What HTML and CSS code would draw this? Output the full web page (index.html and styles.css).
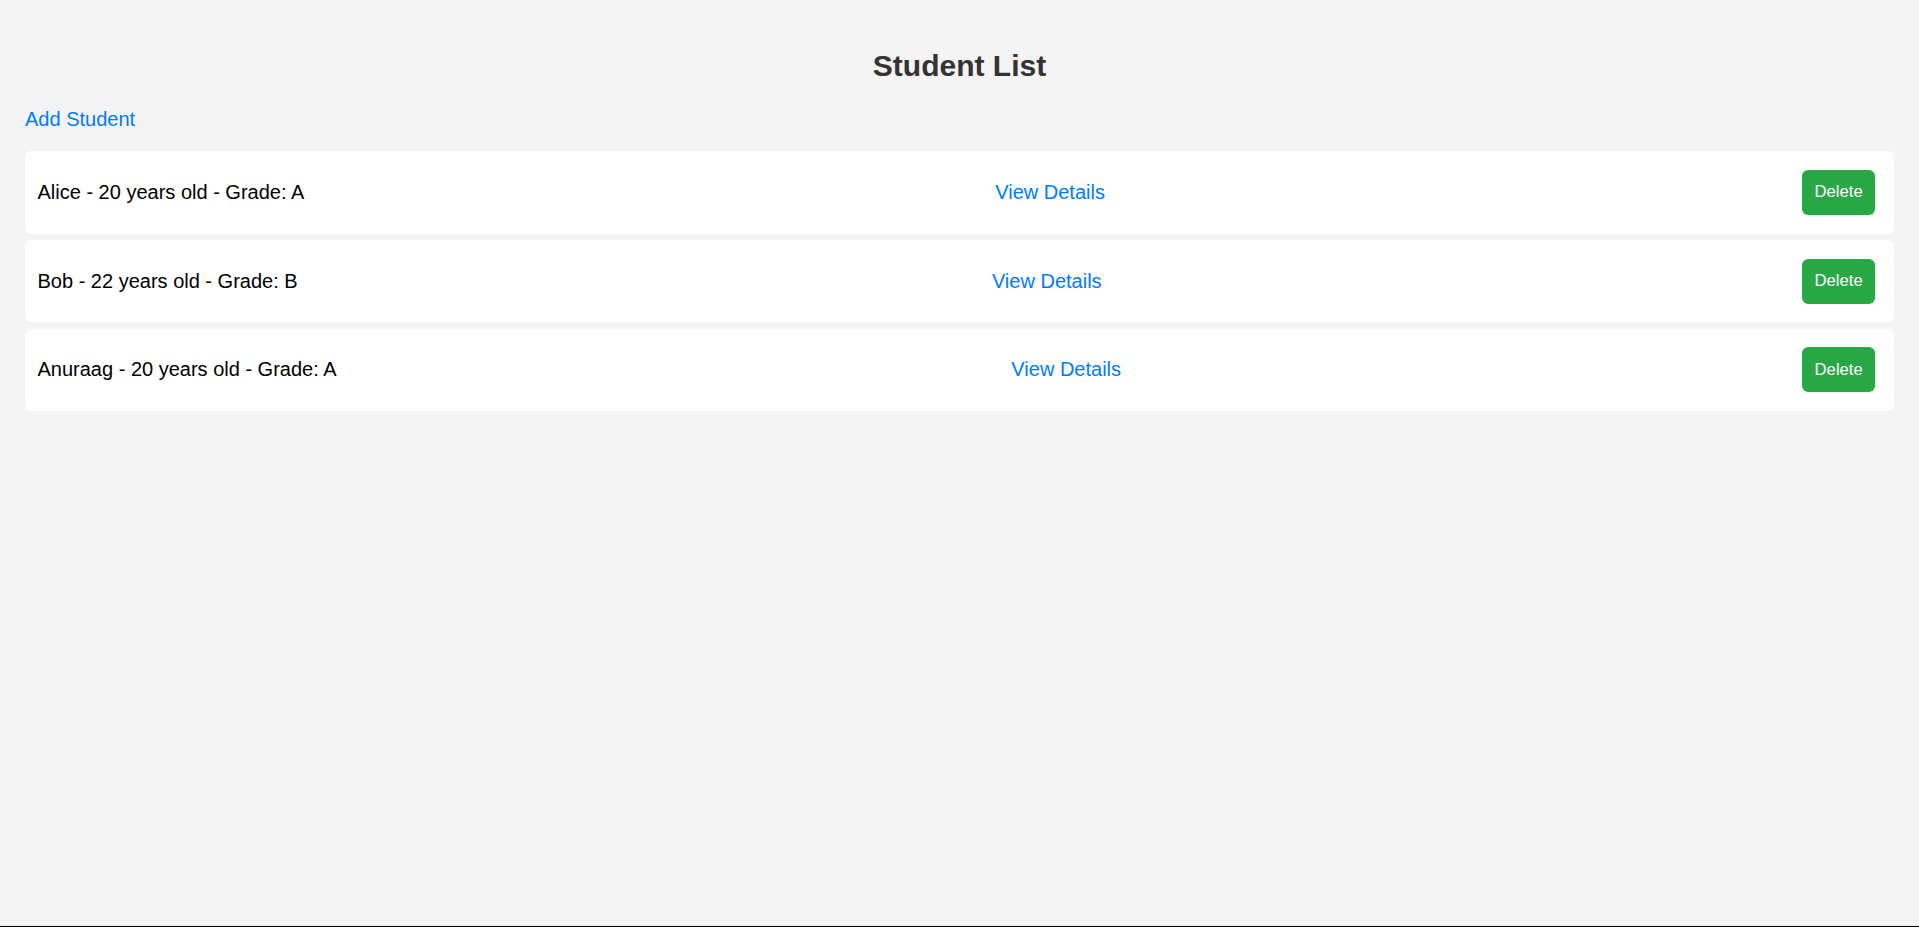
FILE: index.html
```html
<!DOCTYPE html>
<html lang="en">
<head>
<meta charset="utf-8">
<title>Student List</title>
<link rel="stylesheet" href="styles.css">
</head>
<body>
  <h2 class="title">Student List</h2>
  <div class="actions"><a class="link" href="#">Add Student</a></div>
  <ul class="list">
    <li class="item">
      <span class="info">Alice - 20 years old - Grade: A</span>
      <a class="link" href="#">View Details</a>
      <button class="delete">Delete</button>
    </li>
    <li class="item">
      <span class="info">Bob - 22 years old - Grade: B</span>
      <a class="link" href="#">View Details</a>
      <button class="delete">Delete</button>
    </li>
    <li class="item">
      <span class="info">Anuraag - 20 years old - Grade: A</span>
      <a class="link" href="#">View Details</a>
      <button class="delete">Delete</button>
    </li>
  </ul>
  <div class="bottom-line"></div>
</body>
</html>
```

FILE: styles.css
```css
html, body {
  height: 100%;
}
body {
  margin: 0;
  padding: 25px;
  box-sizing: border-box;
  background: #f4f4f4;
  font-family: "Liberation Sans", Arial, sans-serif;
  font-size: 20px;
  color: #000;
}
.title {
  margin: 24px 0 25px;
  font-size: 30px;
  font-weight: bold;
  text-align: center;
  color: #333;
}
.actions {
  font-size: 20px;
}
.link {
  color: #007bff;
  text-decoration: none;
}
.list {
  list-style: none;
  margin: 20px 0 0;
  padding: 0;
}
.item {
  display: flex;
  justify-content: space-between;
  align-items: center;
  background: #fff;
  padding: 12.5px;
  margin-bottom: 6.25px;
  border-radius: 6.25px;
  font-size: 20px;
}
.delete {
  background: #28a745;
  color: #fff;
  border: none;
  border-radius: 6.25px;
  padding: 12.5px;
  margin: 6.25px;
  font-family: "Liberation Sans", Arial, sans-serif;
  font-size: 16.67px;
  cursor: pointer;
}
.bottom-line {
  position: fixed;
  left: 0;
  right: 0;
  bottom: 0;
  height: 1px;
  background: #000;
}
```
